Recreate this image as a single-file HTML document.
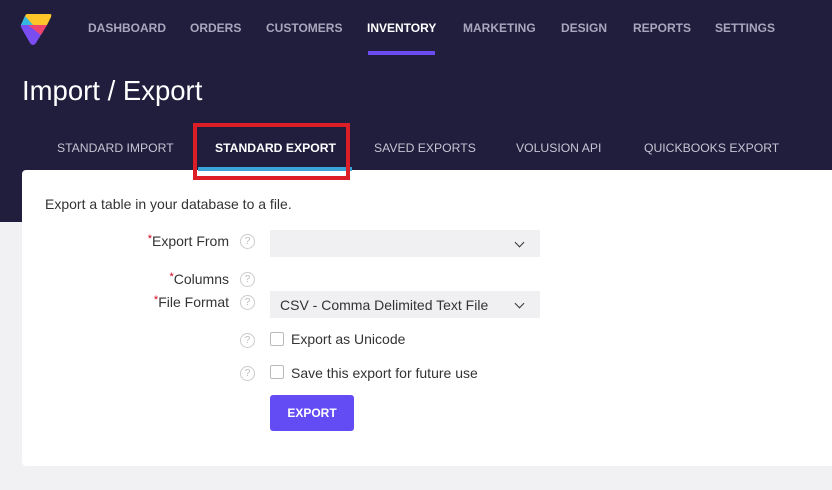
<!DOCTYPE html>
<html><head><meta charset="utf-8"><style>
*{margin:0;padding:0;box-sizing:border-box}
body{width:832px;height:490px;overflow:hidden;background:#f1f1f3;font-family:"Liberation Sans",sans-serif;position:relative}
.hdr{position:absolute;left:0;top:0;width:832px;height:222px;background:#201d3d}
.nav{position:absolute;top:21px;font-size:12px;font-weight:bold;color:#a9a7bd}
.nav.a{color:#fff}
.bar{position:absolute;left:368px;top:51px;width:67px;height:4px;background:#6a4cf0}
h1{position:absolute;left:22px;top:75px;color:#fff;font-weight:normal;font-size:27.5px}
.tab{position:absolute;top:141px;font-size:12.2px;color:#c6c5d3}
.tab.a{color:#fff;font-weight:bold}
.card{position:absolute;left:22px;top:170px;width:810px;height:296px;background:#fff;border-radius:4px 0 0 4px}
.tabline{position:absolute;left:198px;top:167px;width:154px;height:4px;background:#3aa6d8}
.red{position:absolute;left:193px;top:123px;width:157px;height:57px;border:4px solid #dc1f26}
.t{position:absolute;font-size:14px;color:#333}
.lbl{position:absolute;font-size:14px;color:#333;text-align:right;width:200px}
.lbl b{color:#d0021b;font-weight:normal;font-size:11px;vertical-align:top}
.q{position:absolute;width:15px;height:15px;border:1px solid #ccc;border-radius:50%;font-size:10px;color:#bbb;text-align:center;line-height:13px}
.sel{position:absolute;left:270px;width:270px;height:27px;background:#f0f0f2;font-size:14px;color:#333;padding:6px 10px}
.sel:after{content:"";position:absolute;right:17px;top:9px;width:6px;height:6px;border-right:1.8px solid #333;border-bottom:1.8px solid #333;transform:rotate(45deg)}
.cb{position:absolute;left:270px;width:14px;height:14px;border:1px solid #bbb;border-radius:2px}
.btn{position:absolute;left:270px;top:395px;width:84px;height:36px;background:#634cf4;color:#fff;font-weight:bold;font-size:12px;text-align:center;line-height:36px;border-radius:3px}
</style></head><body>
<div class="hdr">
<svg style="position:absolute;left:20px;top:13px" width="32" height="33" viewBox="0 0 32 33">
<path d="M7 1 H30 Q32 1 31 4 L27 12 H1 L5 3 Q6 1 7 1 Z" fill="#ffc629"/>
<path d="M1 12 L5 3 L13 12 Z" fill="#35b9e0"/>
<path d="M1 12 H27 L16 30 Q13 34 10 30 L2 16 Q0 13 1 12 Z" fill="#7a4df0"/>
<path d="M8 12 H27 L21 22 Z" fill="#f2456e"/>
</svg>
<div class="nav" style="left:88px">DASHBOARD</div>
<div class="nav" style="left:190px">ORDERS</div>
<div class="nav" style="left:266px">CUSTOMERS</div>
<div class="nav a" style="left:367px">INVENTORY</div>
<div class="nav" style="left:463px">MARKETING</div>
<div class="nav" style="left:561px">DESIGN</div>
<div class="nav" style="left:633px">REPORTS</div>
<div class="nav" style="left:715px">SETTINGS</div>
<div class="bar"></div>
<h1>Import / Export</h1>
<div class="tab" style="left:57px">STANDARD IMPORT</div>
<div class="tab a" style="left:215px">STANDARD EXPORT</div>
<div class="tab" style="left:374px">SAVED EXPORTS</div>
<div class="tab" style="left:516px">VOLUSION API</div>
<div class="tab" style="left:644px">QUICKBOOKS EXPORT</div>
</div>
<div class="card"></div>
<div class="tabline"></div>
<div class="red"></div>
<div class="t" style="left:45px;top:196px">Export a table in your database to a file.</div>
<div class="lbl" style="left:29px;top:233px"><b>*</b>Export From</div>
<div class="q" style="left:240px;top:234px">?</div>
<div class="sel" style="top:230px"></div>
<div class="lbl" style="left:29px;top:271px"><b>*</b>Columns</div>
<div class="q" style="left:240px;top:272px">?</div>
<div class="lbl" style="left:29px;top:294px"><b>*</b>File Format</div>
<div class="q" style="left:240px;top:295px">?</div>
<div class="sel" style="top:291px">CSV - Comma Delimited Text File</div>
<div class="q" style="left:240px;top:333px">?</div>
<div class="cb" style="top:332px"></div>
<div class="t" style="left:291px;top:331px">Export as Unicode</div>
<div class="q" style="left:240px;top:366px">?</div>
<div class="cb" style="top:365px"></div>
<div class="t" style="left:291px;top:365px">Save this export for future use</div>
<div class="btn">EXPORT</div>
</body></html>
